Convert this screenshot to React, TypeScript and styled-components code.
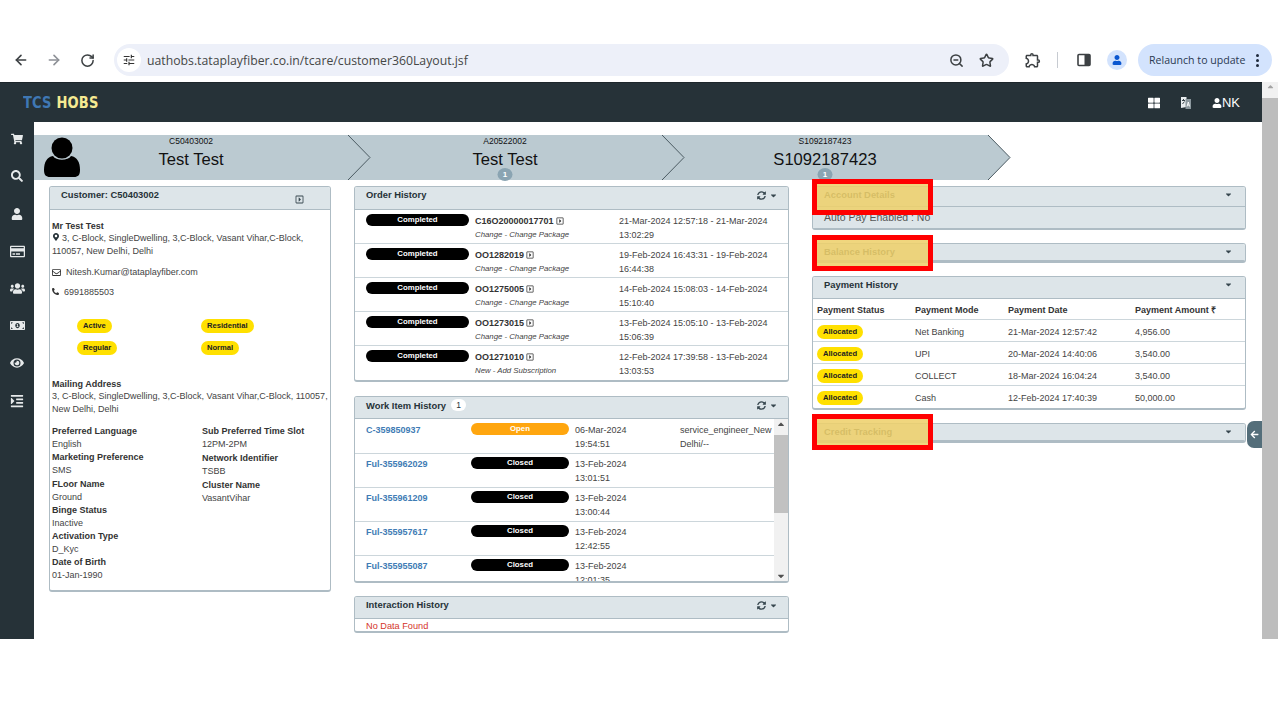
import React from "react";
import styled, { createGlobalStyle } from "styled-components";
import {
    FaArrowLeft,
    FaCaretDown,
    FaCaretUp,
    FaEye,
    FaMapMarkerAlt,
    FaMoneyBillAlt,
    FaPhoneAlt,
    FaRegCaretSquareRight,
    FaRegCreditCard,
    FaRegEnvelope,
    FaSearch,
    FaShoppingCart,
    FaSyncAlt,
    FaThLarge,
    FaUser,
    FaUsers,
    FaIndent,
} from "react-icons/fa";
import { ArrowLeft, ArrowRight, RotateCw, Star, ZoomOut } from "lucide-react";
import { MdOutlineExtension, MdTune } from "react-icons/md";

const GlobalStyle = createGlobalStyle`
    html, body {
        margin: 0;
        padding: 0;
        background: #fff;
        overflow: hidden;
    }
    body {
        font-family: "Liberation Sans", Arial, sans-serif;
        color: #333;
    }
    * {
        box-sizing: border-box;
    }
`;

const Screen = styled.div`
    width: 1280px;
    height: 720px;
    padding-top: 44px;
    overflow: hidden;
    background: #fff;
`;

/* browser chrome */
const BrowserBar = styled.div`
    height: 38px;
    display: flex;
    align-items: flex-start;
    padding-left: 4px;
    color: #444;
`;

const NavButton = styled.div<{ $dim?: boolean }>`
    width: 33.5px;
    height: 32px;
    display: flex;
    align-items: center;
    justify-content: center;
    color: ${(p) => (p.$dim ? "#8d9096" : "#3c4043")};
`;

const UrlPill = styled.div`
    width: 895px;
    height: 32px;
    margin-left: 9.5px;
    border-radius: 16px;
    background: #edf0f9;
    display: flex;
    align-items: center;
    padding: 0 8px 0 3px;
`;

const SiteInfo = styled.div`
    width: 24px;
    height: 24px;
    border-radius: 50%;
    background: #fff;
    display: flex;
    align-items: center;
    justify-content: center;
    color: #333;
`;

const UrlText = styled.div`
    margin-left: 6px;
    flex: 1;
    font-family: "Open Sans", sans-serif;
    font-size: 12.25px;
    color: #454746;
`;

const UrlAction = styled.div`
    width: 30px;
    height: 32px;
    display: flex;
    align-items: center;
    justify-content: center;
    color: #3c4043;
`;

const ToolIcon = styled.div<{ $w: number }>`
    width: ${(p) => p.$w}px;
    height: 32px;
    display: flex;
    align-items: center;
    justify-content: center;
    color: #3c4043;
`;

const ToolDivider = styled.div`
    width: 1px;
    height: 16px;
    margin: 8px 7px 0 0;
    background: #c7cbd1;
`;

const AvatarDot = styled.div`
    width: 20px;
    height: 20px;
    border-radius: 50%;
    background: #d3e3fd;
    color: #0b57d0;
    display: flex;
    align-items: center;
    justify-content: center;
    overflow: hidden;
`;

const RelaunchPill = styled.div`
    width: 134px;
    height: 32px;
    margin-left: 7px;
    border-radius: 16px;
    background: #d3e3fd;
    display: flex;
    align-items: center;
    justify-content: space-between;
    padding: 0 13px 0 11px;
    font-family: "Open Sans", sans-serif;
    font-size: 10.6px;
    color: #2b3a52;
`;

const MenuDots = styled.div`
    display: flex;
    flex-direction: column;
    gap: 2px;
    span {
        width: 3px;
        height: 3px;
        border-radius: 50%;
        background: #1f2a3d;
    }
`;

/* application frame */
const AppFrame = styled.div`
    height: 557px;
    width: 1278px;
    display: flex;
    overflow: hidden;
`;

const AppColumn = styled.div`
    width: 1262px;
    display: flex;
    flex-direction: column;
    position: relative;
`;

const PageScroll = styled.div`
    width: 16px;
    background: #f1f1f1;
    display: flex;
    flex-direction: column;
    align-items: center;
    color: #a3a3a3;
`;

const PageScrollThumb = styled.div`
    width: 16px;
    flex: 1;
    margin-top: 7px;
    background: #bdbdbd;
`;

const TopBar = styled.div`
    height: 40px;
    background: #263238;
    display: flex;
    align-items: center;
    justify-content: space-between;
    padding: 0 22px 0 23px;
    border-top: 1px solid #1d262b;
`;

const Logo = styled.div`
    font-family: "DejaVu Sans", sans-serif;
    font-stretch: condensed;
    font-weight: 700;
    font-size: 16.5px;
    letter-spacing: 0.2px;
    transform: scaleX(0.88);
    transform-origin: left center;
    color: #3f78b4;
    span {
        color: #f6ea92;
    }
`;

const TopActions = styled.div`
    display: flex;
    align-items: center;
    color: #fff;
    gap: 20px;
    font-size: 13px;
`;

const UserTag = styled.div`
    display: flex;
    align-items: center;
    gap: 0;
`;

const Body = styled.div`
    flex: 1;
    display: flex;
    min-height: 0;
`;

const SideNav = styled.nav`
    width: 34px;
    background: #263238;
    display: flex;
    flex-direction: column;
    align-items: center;
    padding-top: 9px;
    gap: 21.4px;
    color: #e6e9ea;
`;

const SideIcon = styled.div`
    height: 16px;
    display: flex;
    align-items: center;
    justify-content: center;
`;

const Main = styled.main`
    flex: 1;
    padding-top: 13px;
    background: #fff;
    min-width: 0;
`;

/* breadcrumb band */
const Band = styled.div`
    display: flex;
    height: 45px;
`;

const Crumb = styled.div<{ $w: number }>`
    position: relative;
    width: ${(p) => p.$w}px;
    background: #bbcad1;
    display: flex;
    flex-direction: column;
    align-items: center;
    color: #111;
`;

const CrumbCode = styled.div`
    font-size: 8.5px;
    line-height: 12px;
`;

const CrumbName = styled.div`
    font-size: 16.6px;
    line-height: 25px;
`;

const CrumbCount = styled.div`
    position: absolute;
    bottom: -1px;
    left: 50%;
    transform: translateX(-50%);
    width: 15px;
    height: 13px;
    border-radius: 50%;
    background: #8aa4b2;
    color: #fff;
    font-size: 8px;
    font-weight: 700;
    line-height: 13px;
    text-align: center;
`;

const CrumbAvatar = styled.div`
    position: absolute;
    left: 10px;
    top: 2px;
`;

const CrumbEdge = styled.svg`
    position: absolute;
    top: 0;
    right: -23px;
    z-index: 1;
`;

const Columns = styled.div`
    display: flex;
    align-items: flex-start;
    gap: 23px;
    padding: 6px 0 0 15px;
`;

const Column = styled.div<{ $w: number }>`
    width: ${(p) => p.$w}px;
    display: flex;
    flex-direction: column;
    position: relative;
`;

const Panel = styled.section<{ $mb?: number }>`
    border: 1px solid #aebcc4;
    border-bottom-width: 2px;
    border-radius: 3px;
    background: #fff;
    margin-bottom: ${(p) => p.$mb ?? 0}px;
    overflow: hidden;
`;

const PanelHeader = styled.div<{ $h?: number }>`
    height: ${(p) => p.$h ?? 23}px;
    background: #dde5e9;
    border-bottom: 1px solid #aebcc4;
    display: flex;
    align-items: flex-start;
    justify-content: space-between;
    padding: 2px 10px 0 11px;
    color: #78909c;
`;

const PanelTitle = styled.div`
    font-size: 9.4px;
    font-weight: 700;
    line-height: 11px;
    color: #263238;
    display: flex;
    align-items: center;
    gap: 5px;
`;

const CountChip = styled.span`
    width: 15px;
    height: 12px;
    border-radius: 6px;
    background: #fff;
    font-weight: 400;
    font-size: 8.5px;
    line-height: 12px;
    text-align: center;
`;

const HeaderTools = styled.div`
    display: flex;
    align-items: center;
    gap: 3px;
    color: #37474f;
    margin-top: 2px;
`;

const HeaderCaret = styled.div`
    color: #37474f;
    margin: 1px 2px 0 0;
    display: flex;
`;

/* customer panel */
const CustomerHeader = styled(PanelHeader)`
    padding-right: 26px;
`;

const ExpandIcon = styled.div`
    margin-top: 6px;
    color: #37474f;
    display: flex;
`;

const CustomerBody = styled.div`
    padding: 10px 0 8px 2px;
    font-size: 9px;
    line-height: 12.4px;
    color: #444;
`;

const BoldLine = styled.div`
    font-weight: 700;
    color: #333;
`;

const ContactLine = styled.div<{ $mt: number }>`
    margin-top: ${(p) => p.$mt}px;
    display: flex;
    align-items: center;
    gap: 5px;
    svg {
        color: #333;
    }
`;

const AddressIcon = styled.span`
    margin-right: 2px;
    color: #263238;
`;

const TagGrid = styled.div`
    display: grid;
    grid-template-columns: 124px 1fr;
    row-gap: 8px;
    margin: 21px 0 0 25px;
    justify-items: start;
`;

const Tag = styled.span`
    height: 14px;
    padding: 0 6px;
    border-radius: 7px;
    background: #ffe000;
    color: #222;
    font-size: 7.6px;
    font-weight: 700;
    line-height: 13px;
    display: inline-block;
`;

const MailingBlock = styled.div`
    margin-top: 23px;
    white-space: nowrap;
`;

const Attributes = styled.div`
    display: grid;
    grid-template-columns: 150px 1fr;
    margin-top: 10px;
`;

const AttrColumn = styled.div<{ $gap: number }>`
    display: flex;
    flex-direction: column;
    row-gap: ${(p) => p.$gap}px;
    line-height: 13px;
`;

/* shared table rows */
const Row = styled.div<{ $cols: string; $h: number }>`
    display: grid;
    grid-template-columns: ${(p) => p.$cols};
    height: ${(p) => p.$h}px;
    border-bottom: 1px solid #ccd6db;
    font-size: 9px;
    line-height: 14px;
    color: #444;
    &:last-child {
        border-bottom: none;
    }
`;

const StatusPill = styled.div<{ $bg?: string }>`
    height: 12px;
    border-radius: 6px;
    background: ${(p) => p.$bg ?? "#000"};
    color: #fff;
    font-size: 7.8px;
    font-weight: 700;
    line-height: 11px;
    text-align: center;
`;

const OrderCell = styled.div`
    padding-top: 4px;
`;

const OrderNumber = styled.div`
    font-weight: 700;
    color: #333;
    display: flex;
    align-items: center;
    gap: 2px;
    font-size: 9px;
`;

const OrderKind = styled.div`
    font-size: 7.8px;
    font-style: italic;
    margin-top: -0.5px;
`;

const WorkList = styled.div`
    position: relative;
    height: 162px;
    padding-top: 1px;
    overflow: hidden;
`;

const WorkCell = styled.div`
    padding-top: 3px;
`;

const WorkLink = styled(WorkCell)`
    color: #3f7cb5;
    font-weight: 700;
`;

const WorkDate = styled(WorkCell)`
    padding-left: 6px;
    padding-right: 20px;
`;

const WorkOwner = styled(WorkCell)`
    padding-right: 13px;
`;

const WorkScrollbar = styled.div`
    position: absolute;
    right: 0;
    top: 0;
    bottom: 0;
    width: 14px;
    background: #f1f1f1;
    display: flex;
    flex-direction: column;
    align-items: center;
    justify-content: space-between;
    color: #505050;
`;

const WorkThumb = styled.div`
    position: absolute;
    top: 16px;
    left: 0;
    width: 14px;
    height: 78px;
    background: #c1c1c1;
`;

const NoData = styled.div`
    height: 12px;
    padding-left: 11px;
    font-size: 9.2px;
    line-height: 14px;
    color: #d4352b;
    overflow: hidden;
`;

/* right column */
const AccountBody = styled.div`
    height: 21px;
    background: #dde5e9;
    padding: 3px 0 0 11px;
    font-size: 10.5px;
    line-height: 15px;
    color: #555;
`;

const PayHead = styled(Row)`
    font-weight: 700;
    color: #333;
    padding: 4px 0 0 4px;
`;

const PayRow = styled(Row)`
    padding: 4px 0 0 4px;
    align-items: start;
`;

const PayCell = styled.div`
    padding-top: 1px;
`;

const Highlight = styled.div<{ $top: number }>`
    position: absolute;
    left: 0;
    top: ${(p) => p.$top}px;
    width: 121px;
    height: 36px;
    border: 5.5px solid #ff0000;
    background: rgba(238, 208, 108, 0.88);
    z-index: 2;
`;

const SlideTab = styled.div`
    position: absolute;
    right: 0;
    top: 339px;
    width: 15px;
    height: 27px;
    border-radius: 7px 0 0 7px;
    background: #546e7a;
    color: #fff;
    display: flex;
    align-items: center;
    padding-left: 3px;
    z-index: 3;
`;

const orders = [
    { no: "C16O20000017701", kind: "Change - Change Package", date: "21-Mar-2024 12:57:18 - 21-Mar-2024 13:02:29" },
    { no: "OO1282019", kind: "Change - Change Package", date: "19-Feb-2024 16:43:31 - 19-Feb-2024 16:44:38" },
    { no: "OO1275005", kind: "Change - Change Package", date: "14-Feb-2024 15:08:03 - 14-Feb-2024 15:10:40" },
    { no: "OO1273015", kind: "Change - Change Package", date: "13-Feb-2024 15:05:10 - 13-Feb-2024 15:06:39" },
    { no: "OO1271010", kind: "New - Add Subscription", date: "12-Feb-2024 17:39:58 - 13-Feb-2024 13:03:53" },
];

const workItems = [
    { id: "C-359850937", status: "Open", date: "06-Mar-2024 19:54:51", owner: "service_engineer_New Delhi/--" },
    { id: "Ful-355962029", status: "Closed", date: "13-Feb-2024 13:01:51", owner: "" },
    { id: "Ful-355961209", status: "Closed", date: "13-Feb-2024 13:00:44", owner: "" },
    { id: "Ful-355957617", status: "Closed", date: "13-Feb-2024 12:42:55", owner: "" },
    { id: "Ful-355955087", status: "Closed", date: "13-Feb-2024 12:01:35", owner: "" },
];

const payments = [
    { mode: "Net Banking", date: "21-Mar-2024 12:57:42", amount: "4,956.00" },
    { mode: "UPI", date: "20-Mar-2024 14:40:06", amount: "3,540.00" },
    { mode: "COLLECT", date: "18-Mar-2024 16:04:24", amount: "3,540.00" },
    { mode: "Cash", date: "12-Feb-2024 17:40:39", amount: "50,000.00" },
];

const leftAttrs = [
    ["Preferred Language", "English"],
    ["Marketing Preference", "SMS"],
    ["FLoor Name", "Ground"],
    ["Binge Status", "Inactive"],
    ["Activation Type", "D_Kyc"],
    ["Date of Birth", "01-Jan-1990"],
];

const rightAttrs = [
    ["Sub Preferred Time Slot", "12PM-2PM"],
    ["Network Identifier", "TSBB"],
    ["Cluster Name", "VasantVihar"],
];

const ORDER_COLS = "11px 103px 6px 144px 1fr";
const WORK_COLS = "11px 105px 98px 111px 1fr";
const PAY_COLS = "98px 93px 127px 1fr";

function Edge({ filled }: { filled?: boolean }) {
    return (
        <CrumbEdge width="23" height="45" viewBox="0 0 23 45">
            {filled && <path d="M0 0 L22 22.5 L0 45 Z" fill="#bbcad1" />}
            <path d="M0 0 L22 22.5 L0 45" fill="none" stroke="#4b5a62" strokeWidth="1" />
        </CrumbEdge>
    );
}

function PersonAvatar() {
    return (
        <svg width="36" height="41" viewBox="0 0 36 41">
            <circle cx="18" cy="11" r="10.5" fill="#000" />
            <path d="M0 33 C0 25 3 20 9 19 C12 24 24 24 27 19 C33 20 36 25 36 33 C36 38 34 40 30 40 L6 40 C2 40 0 38 0 33 Z" fill="#000" />
        </svg>
    );
}

function SidePanelIcon() {
    return (
        <svg width="14" height="14" viewBox="0 0 14 14">
            <rect x="1" y="1.5" width="12" height="11" rx="1" fill="none" stroke="#3c4043" strokeWidth="1.6" />
            <rect x="7.5" y="1.5" width="5.5" height="11" fill="#3c4043" />
        </svg>
    );
}

function TranslateIcon() {
    return (
        <svg width="12" height="14" viewBox="0 0 12 14">
            <path d="M1 1 L6.5 1 L6.5 11 L1 12 Z" fill="#e8ecee" />
            <path d="M5.5 3 L11 3 L11 13 L5.5 13 Z" fill="#8b979d" />
            <path d="M2 4.5 H5 M3.5 3 V4.5 M2.5 8 L4.5 5.5" stroke="#263238" strokeWidth="0.9" fill="none" />
            <path d="M7 10.5 L8.3 6 L9.6 10.5 M7.5 9 H9.1" stroke="#fff" strokeWidth="0.9" fill="none" />
        </svg>
    );
}

function Refresh() {
    return (
        <HeaderTools>
            <FaSyncAlt size={9} />
            <FaCaretDown size={9} />
        </HeaderTools>
    );
}

function Attrs({ items }: { items: string[][] }) {
    return (
        <>
            {items.map(([label, value]) => (
                <div key={label}>
                    <BoldLine>{label}</BoldLine>
                    <div>{value}</div>
                </div>
            ))}
        </>
    );
}

export default function App() {
    return (
        <Screen>
            <GlobalStyle />
            <BrowserBar>
                <NavButton><ArrowLeft size={16} strokeWidth={2.4} /></NavButton>
                <NavButton $dim><ArrowRight size={16} strokeWidth={2.4} /></NavButton>
                <NavButton><RotateCw size={15} strokeWidth={2.4} /></NavButton>
                <UrlPill>
                    <SiteInfo><MdTune size={14} /></SiteInfo>
                    <UrlText>uathobs.tataplayfiber.co.in/tcare/customer360Layout.jsf</UrlText>
                    <UrlAction><ZoomOut size={15} strokeWidth={2.4} /></UrlAction>
                    <UrlAction><Star size={15} strokeWidth={2.4} /></UrlAction>
                </UrlPill>
                <ToolIcon $w={48}><MdOutlineExtension size={18} /></ToolIcon>
                <ToolDivider />
                <ToolIcon $w={38}><SidePanelIcon /></ToolIcon>
                <ToolIcon $w={28}>
                    <AvatarDot><FaUser size={10} /></AvatarDot>
                </ToolIcon>
                <RelaunchPill>
                    Relaunch to update
                    <MenuDots><span /><span /><span /></MenuDots>
                </RelaunchPill>
            </BrowserBar>
            <AppFrame>
                <AppColumn>
                    <TopBar>
                        <Logo>TCS <span>HOBS</span></Logo>
                        <TopActions>
                            <FaThLarge size={12} />
                            <TranslateIcon />
                            <UserTag><FaUser size={10} />NK</UserTag>
                        </TopActions>
                    </TopBar>
                    <Body>
                        <SideNav>
                            <SideIcon><FaShoppingCart size={12} /></SideIcon>
                            <SideIcon><FaSearch size={12} /></SideIcon>
                            <SideIcon><FaUser size={12} /></SideIcon>
                            <SideIcon><FaRegCreditCard size={15} /></SideIcon>
                            <SideIcon><FaUsers size={15} /></SideIcon>
                            <SideIcon><FaMoneyBillAlt size={15} /></SideIcon>
                            <SideIcon><FaEye size={14} /></SideIcon>
                            <SideIcon><FaIndent size={14} /></SideIcon>
                        </SideNav>
                        <Main>
                            <Band>
                                <Crumb $w={314}>
                                    <CrumbAvatar><PersonAvatar /></CrumbAvatar>
                                    <CrumbCode>C50403002</CrumbCode>
                                    <CrumbName>Test Test</CrumbName>
                                    <Edge />
                                </Crumb>
                                <Crumb $w={314}>
                                    <CrumbCode>A20522002</CrumbCode>
                                    <CrumbName>Test Test</CrumbName>
                                    <CrumbCount>1</CrumbCount>
                                    <Edge />
                                </Crumb>
                                <Crumb $w={326}>
                                    <CrumbCode>S1092187423</CrumbCode>
                                    <CrumbName>S1092187423</CrumbName>
                                    <CrumbCount>1</CrumbCount>
                                    <Edge filled />
                                </Crumb>
                            </Band>
                            <Columns>
                                <Column $w={282}>
                                    <Panel>
                                        <CustomerHeader>
                                            <PanelTitle>Customer: C50403002</PanelTitle>
                                            <ExpandIcon><FaRegCaretSquareRight size={9} /></ExpandIcon>
                                        </CustomerHeader>
                                        <CustomerBody>
                                            <BoldLine>Mr Test Test</BoldLine>
                                            <div>
                                                <AddressIcon><FaMapMarkerAlt size={8} /></AddressIcon>
                                                3, C-Block, SingleDwelling, 3,C-Block, Vasant Vihar,C-Block,
                                                <br />
                                                110057, New Delhi, Delhi
                                            </div>
                                            <ContactLine $mt={9}><FaRegEnvelope size={9} />Nitesh.Kumar@tataplayfiber.com</ContactLine>
                                            <ContactLine $mt={7}><FaPhoneAlt size={7} />6991885503</ContactLine>
                                            <TagGrid>
                                                <div><Tag>Active</Tag></div>
                                                <div><Tag>Residential</Tag></div>
                                                <div><Tag>Regular</Tag></div>
                                                <div><Tag>Normal</Tag></div>
                                            </TagGrid>
                                            <MailingBlock>
                                                <BoldLine>Mailing Address</BoldLine>
                                                <div>
                                                    3, C-Block, SingleDwelling, 3,C-Block, Vasant Vihar,C-Block, 110057,
                                                    <br />
                                                    New Delhi, Delhi
                                                </div>
                                            </MailingBlock>
                                            <Attributes>
                                                <AttrColumn $gap={0.2}><Attrs items={leftAttrs} /></AttrColumn>
                                                <AttrColumn $gap={1}><Attrs items={rightAttrs} /></AttrColumn>
                                            </Attributes>
                                        </CustomerBody>
                                    </Panel>
                                </Column>
                                <Column $w={435}>
                                    <Panel $mb={14}>
                                        <PanelHeader>
                                            <PanelTitle>Order History</PanelTitle>
                                            <Refresh />
                                        </PanelHeader>
                                        {orders.map((o) => (
                                            <Row key={o.no} $cols={ORDER_COLS} $h={34}>
                                                <div />
                                                <OrderCell><StatusPill>Completed</StatusPill></OrderCell>
                                                <div />
                                                <OrderCell>
                                                    <OrderNumber>{o.no} <FaRegCaretSquareRight size={8} /></OrderNumber>
                                                    <OrderKind>{o.kind}</OrderKind>
                                                </OrderCell>
                                                <OrderCell>{o.date}</OrderCell>
                                            </Row>
                                        ))}
                                    </Panel>
                                    <Panel $mb={13}>
                                        <PanelHeader $h={22}>
                                            <PanelTitle>Work Item History <CountChip>1</CountChip></PanelTitle>
                                            <Refresh />
                                        </PanelHeader>
                                        <WorkList>
                                            {workItems.map((w) => (
                                                <Row key={w.id} $cols={WORK_COLS} $h={34}>
                                                    <div />
                                                    <WorkLink>{w.id}</WorkLink>
                                                    <WorkCell>
                                                        <StatusPill $bg={w.status === "Open" ? "#ffa60f" : undefined}>{w.status}</StatusPill>
                                                    </WorkCell>
                                                    <WorkDate>{w.date}</WorkDate>
                                                    <WorkOwner>{w.owner}</WorkOwner>
                                                </Row>
                                            ))}
                                            <WorkScrollbar>
                                                <FaCaretUp size={10} />
                                                <WorkThumb />
                                                <FaCaretDown size={10} />
                                            </WorkScrollbar>
                                        </WorkList>
                                    </Panel>
                                    <Panel>
                                        <PanelHeader $h={22}>
                                            <PanelTitle>Interaction History</PanelTitle>
                                            <Refresh />
                                        </PanelHeader>
                                        <NoData>No Data Found</NoData>
                                    </Panel>
                                </Column>
                                <Column $w={434}>
                                    <Highlight $top={-7} />
                                    <Highlight $top={49} />
                                    <Highlight $top={228} />
                                    <Panel $mb={13}>
                                        <PanelHeader $h={20}>
                                            <PanelTitle>Account Details</PanelTitle>
                                            <HeaderCaret><FaCaretDown size={9} /></HeaderCaret>
                                        </PanelHeader>
                                        <AccountBody>Auto Pay Enabled : No</AccountBody>
                                    </Panel>
                                    <Panel $mb={13}>
                                        <PanelHeader $h={17}>
                                            <PanelTitle>Balance History</PanelTitle>
                                            <HeaderCaret><FaCaretDown size={9} /></HeaderCaret>
                                        </PanelHeader>
                                    </Panel>
                                    <Panel $mb={13}>
                                        <PanelHeader $h={22}>
                                            <PanelTitle>Payment History</PanelTitle>
                                            <HeaderCaret><FaCaretDown size={9} /></HeaderCaret>
                                        </PanelHeader>
                                        <PayHead $cols={PAY_COLS} $h={21}>
                                            <div>Payment Status</div>
                                            <div>Payment Mode</div>
                                            <div>Payment Date</div>
                                            <div>Payment Amount ₹</div>
                                        </PayHead>
                                        {payments.map((p) => (
                                            <PayRow key={p.date} $cols={PAY_COLS} $h={22}>
                                                <div><Tag>Allocated</Tag></div>
                                                <PayCell>{p.mode}</PayCell>
                                                <PayCell>{p.date}</PayCell>
                                                <PayCell>{p.amount}</PayCell>
                                            </PayRow>
                                        ))}
                                    </Panel>
                                    <Panel>
                                        <PanelHeader $h={17}>
                                            <PanelTitle>Credit Tracking</PanelTitle>
                                            <HeaderCaret><FaCaretDown size={9} /></HeaderCaret>
                                        </PanelHeader>
                                    </Panel>
                                </Column>
                            </Columns>
                        </Main>
                    </Body>
                    <SlideTab><FaArrowLeft size={9} /></SlideTab>
                </AppColumn>
                <PageScroll>
                    <FaCaretUp size={9} />
                    <PageScrollThumb />
                </PageScroll>
            </AppFrame>
        </Screen>
    );
}
